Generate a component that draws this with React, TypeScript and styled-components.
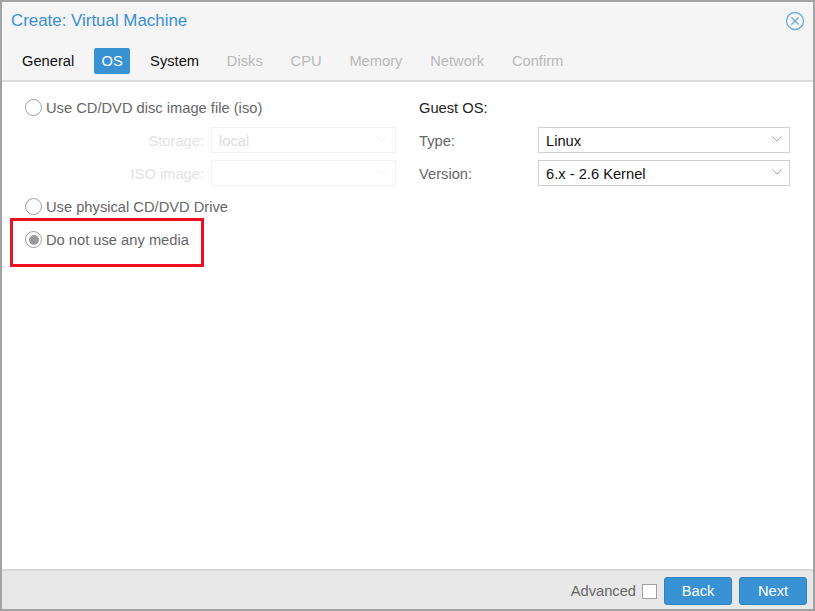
import { createGlobalStyle } from 'styled-components';
import styled from 'styled-components';

const GlobalStyle = createGlobalStyle`
  html, body {
    margin: 0;
    padding: 0;
    background: #ffffff;
  }
  * {
    box-sizing: border-box;
  }
`;

const Dialog = styled.div`
  position: relative;
  display: flex;
  flex-direction: column;
  width: 815px;
  height: 611px;
  border: 2px solid #a3a3a3;
  font-family: 'Liberation Sans', Arial, sans-serif;
  font-size: 14.7px;
  background: #ffffff;
`;

const Header = styled.div`
  display: flex;
  flex-direction: column;
  height: 80px;
  background: #f5f5f5;
  border-bottom: 2px solid #dcdcdc;
`;

const TitleBar = styled.div`
  display: flex;
  align-items: center;
  justify-content: space-between;
  height: 36px;
  padding: 1px 8px 0 9px;
`;

const Title = styled.div`
  font-size: 16.9px;
  color: #3a8fd3;
`;

const TabRow = styled.div`
  display: flex;
  gap: 11.8px;
  margin-top: 10px;
  padding-left: 12px;
`;

const Tab = styled.div<{ $active?: boolean; $disabled?: boolean }>`
  display: flex;
  align-items: center;
  height: 26px;
  padding: ${(props) => (props.$active ? '0 7.5px' : '0 8px')};
  border-radius: 2px;
  background: ${(props) => (props.$active ? '#3892d4' : 'transparent')};
  color: ${(props) => (props.$active ? '#ffffff' : props.$disabled ? '#b9b9b9' : '#111111')};
`;

const Body = styled.div`
  flex: 1;
  display: flex;
  padding: 12px 23px 0 22px;
`;

const LeftColumn = styled.div`
  display: flex;
  flex-direction: column;
  width: 395px;
`;

const RightColumn = styled.div`
  display: flex;
  flex-direction: column;
  flex: 1;
`;

const RadioRow = styled.div`
  display: flex;
  align-items: center;
  gap: 4px;
  height: 26px;
  margin-bottom: 7px;
  padding-top: 1px;
  color: #666666;
`;

const RadioCircle = styled.span<{ $checked?: boolean }>`
  display: flex;
  align-items: center;
  justify-content: center;
  width: 17px;
  height: 17px;
  margin-left: 1px;
  border: 1.5px solid #9e9e9e;
  border-radius: 50%;
  background: #ffffff;
  &::after {
    content: '';
    display: ${(props) => (props.$checked ? 'block' : 'none')};
    width: 10px;
    height: 10px;
    border-radius: 50%;
    background: #9a9a9a;
  }
`;

const FieldRow = styled.div`
  display: flex;
  align-items: center;
  height: 26px;
  margin-bottom: 7px;
`;

const DisabledLabel = styled.div`
  width: 187px;
  padding: 1px 7px 0 0;
  text-align: right;
  color: #e2e2e2;
`;

const DisabledSelect = styled.div`
  display: flex;
  align-items: center;
  justify-content: space-between;
  width: 185px;
  height: 26px;
  padding: 1px 9px 0 7px;
  border: 1px solid #f2f2f2;
  color: #dddddd;
`;

const GuestTitle = styled.div`
  display: flex;
  align-items: center;
  height: 26px;
  margin-bottom: 7px;
  padding-top: 1px;
  color: #222222;
`;

const FormLabel = styled.div`
  width: 119px;
  padding-top: 1px;
  color: #666666;
`;

const Select = styled.div`
  display: flex;
  align-items: center;
  justify-content: space-between;
  flex: 1;
  height: 26px;
  padding: 1px 7px 0;
  border: 1px solid #cfcfcf;
  color: #111111;
`;

const Footer = styled.div`
  display: flex;
  align-items: center;
  justify-content: flex-end;
  height: 40px;
  padding: 2px 6px 0 0;
  background: #e8e8e8;
  border-top: 2px solid #d9d9d9;
`;

const AdvancedLabel = styled.div`
  color: #666666;
`;

const Checkbox = styled.div`
  width: 15px;
  height: 15px;
  margin-left: 6px;
  border: 1px solid #a0a0a0;
  background: #ffffff;
`;

const Button = styled.div`
  display: flex;
  align-items: center;
  justify-content: center;
  width: 68px;
  height: 28px;
  margin-left: 7px;
  border: 1px solid #2f83c5;
  border-radius: 3px;
  background: #3892d4;
  color: #ffffff;
`;

const ChevronIcon = styled.svg`
  margin-bottom: 4px;
`;

const CloseGlyph = styled.svg`
  margin-top: 1px;
`;

const Highlight = styled.div`
  position: absolute;
  left: 8px;
  top: 216px;
  width: 194px;
  height: 49px;
  border: 3px solid #ee1122;
`;

function Chevron({ color }: { color: string }) {
  return (
    <ChevronIcon width="10" height="6" viewBox="0 0 10 6" fill="none">
      <path d="M0.5 0.5 L5 5 L9.5 0.5" stroke={color} strokeWidth="1" />
    </ChevronIcon>
  );
}

function CloseIcon() {
  return (
    <CloseGlyph width="20" height="20" viewBox="0 0 20 20" fill="none">
      <circle cx="10" cy="10" r="8.5" stroke="#69a9dc" strokeWidth="1.3" />
      <path d="M6.5 6.5 L13.5 13.5 M13.5 6.5 L6.5 13.5" stroke="#69a9dc" strokeWidth="1.3" />
    </CloseGlyph>
  );
}

const tabs = ['General', 'OS', 'System', 'Disks', 'CPU', 'Memory', 'Network', 'Confirm'];

export default function App() {
  return (
    <>
      <GlobalStyle />
      <Dialog>
        <Header>
          <TitleBar>
            <Title>Create: Virtual Machine</Title>
            <CloseIcon />
          </TitleBar>
          <TabRow>
            {tabs.map((tab, i) => (
              <Tab key={tab} $active={tab === 'OS'} $disabled={i > 2}>
                {tab}
              </Tab>
            ))}
          </TabRow>
        </Header>
        <Body>
          <LeftColumn>
            <RadioRow>
              <RadioCircle />
              Use CD/DVD disc image file (iso)
            </RadioRow>
            <FieldRow>
              <DisabledLabel>Storage:</DisabledLabel>
              <DisabledSelect>
                local
                <Chevron color="#ececec" />
              </DisabledSelect>
            </FieldRow>
            <FieldRow>
              <DisabledLabel>ISO image:</DisabledLabel>
              <DisabledSelect>
                <span />
                <Chevron color="#ececec" />
              </DisabledSelect>
            </FieldRow>
            <RadioRow>
              <RadioCircle />
              Use physical CD/DVD Drive
            </RadioRow>
            <RadioRow>
              <RadioCircle $checked />
              Do not use any media
            </RadioRow>
          </LeftColumn>
          <RightColumn>
            <GuestTitle>Guest OS:</GuestTitle>
            <FieldRow>
              <FormLabel>Type:</FormLabel>
              <Select>
                Linux
                <Chevron color="#a8a8a8" />
              </Select>
            </FieldRow>
            <FieldRow>
              <FormLabel>Version:</FormLabel>
              <Select>
                6.x - 2.6 Kernel
                <Chevron color="#a8a8a8" />
              </Select>
            </FieldRow>
          </RightColumn>
        </Body>
        <Footer>
          <AdvancedLabel>Advanced</AdvancedLabel>
          <Checkbox />
          <Button>Back</Button>
          <Button>Next</Button>
        </Footer>
        <Highlight />
      </Dialog>
    </>
  );
}
